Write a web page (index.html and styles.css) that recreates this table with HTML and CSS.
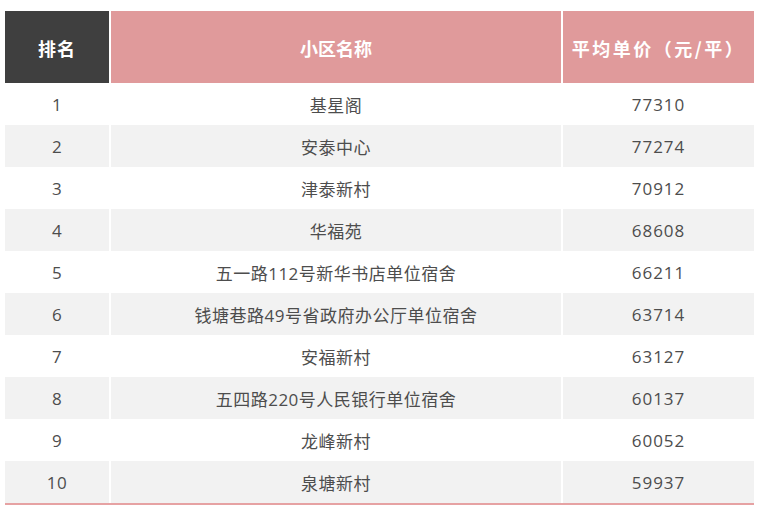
FILE: index.html
```html
<!DOCTYPE html>
<html lang="zh">
<head>
<meta charset="utf-8">
<link rel="stylesheet" href="styles.css">
</head>
<body>
<div class="table">
  <div class="row head">
    <div class="cell c1">排名</div>
    <div class="cell c2">小区名称</div>
    <div class="cell c3">平均单价（元/平）</div>
  </div>
  <div class="row"><div class="cell c1">1</div><div class="cell c2">基星阁</div><div class="cell c3">77310</div></div>
  <div class="row alt"><div class="cell c1">2</div><div class="cell c2">安泰中心</div><div class="cell c3">77274</div></div>
  <div class="row"><div class="cell c1">3</div><div class="cell c2">津泰新村</div><div class="cell c3">70912</div></div>
  <div class="row alt"><div class="cell c1">4</div><div class="cell c2">华福苑</div><div class="cell c3">68608</div></div>
  <div class="row"><div class="cell c1">5</div><div class="cell c2">五一路112号新华书店单位宿舍</div><div class="cell c3">66211</div></div>
  <div class="row alt"><div class="cell c1">6</div><div class="cell c2">钱塘巷路49号省政府办公厅单位宿舍</div><div class="cell c3">63714</div></div>
  <div class="row"><div class="cell c1">7</div><div class="cell c2">安福新村</div><div class="cell c3">63127</div></div>
  <div class="row alt"><div class="cell c1">8</div><div class="cell c2">五四路220号人民银行单位宿舍</div><div class="cell c3">60137</div></div>
  <div class="row"><div class="cell c1">9</div><div class="cell c2">龙峰新村</div><div class="cell c3">60052</div></div>
  <div class="row alt last"><div class="cell c1">10</div><div class="cell c2">泉塘新村</div><div class="cell c3">59937</div></div>
</div>
</body>
</html>
```

FILE: styles.css
```css
html, body {
  margin: 0;
  padding: 0;
  background: #ffffff;
}
body {
  padding: 11px 0 0 5px;
  font-family: "Open Sans", "Noto Sans CJK SC", sans-serif;
}
.table {
  width: 749px;
  display: flex;
  flex-direction: column;
  border-bottom: 2px solid #e6a2a3;
  box-shadow: 0 1px 0 #dcd6d6;
}
.row {
  display: grid;
  grid-template-columns: 104px 450px 191px;
  column-gap: 2px;
  height: 42px;
}
.cell {
  display: flex;
  align-items: center;
  justify-content: center;
  font-size: 17px;
  letter-spacing: 0.5px;
  color: #4d4d4d;
}
.c3 {
  letter-spacing: 1px;
}
.alt .cell {
  background: #f2f2f2;
}
.head {
  height: 72px;
}
.head .cell {
  font-family: "Noto Sans CJK SC", sans-serif;
  font-weight: bold;
  font-size: 18px;
  letter-spacing: 0;
  color: #ffffff;
  background: #e09a9b;
  padding-top: 2px;
}
.head .c1 {
  background: #3f3f3f;
  letter-spacing: 1px;
}
.head .c3 {
  letter-spacing: 2.5px;
}
```
